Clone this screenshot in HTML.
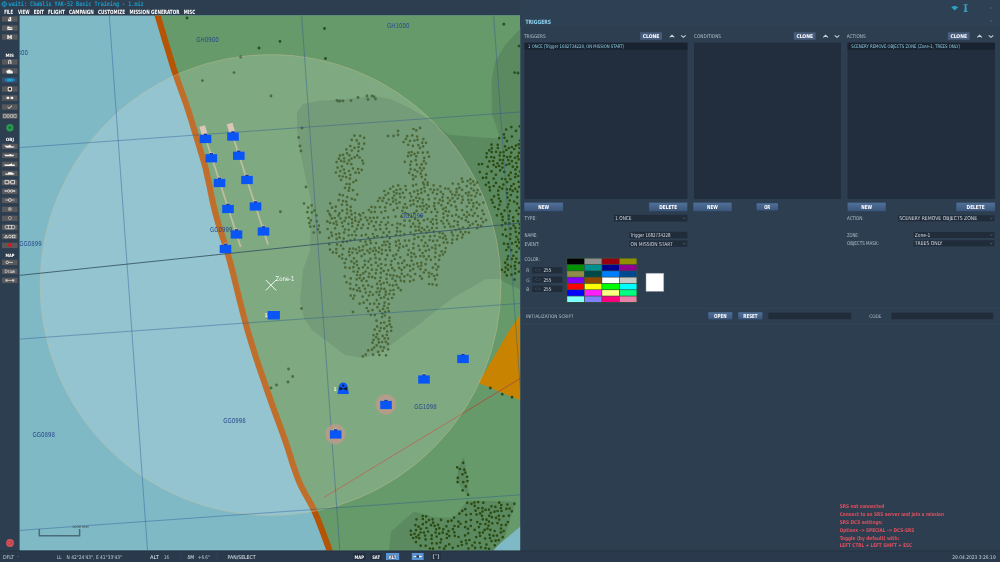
<!DOCTYPE html>
<html><head><meta charset="utf-8"><title>Mission Editor</title>
<style>
html,body{margin:0;padding:0;background:#2d3e50;width:1000px;height:562px;overflow:hidden}
svg text{font-family:"DejaVu Sans Condensed","DejaVu Sans","Liberation Sans",sans-serif}
svg .mono{font-family:"DejaVu Sans Mono","Liberation Mono",monospace}
</style></head><body>
<svg width="1000" height="562" viewBox="0 0 1000 562" style="position:absolute;left:0;top:0;will-change:transform">
<defs><clipPath id="mc"><rect x="19.6" y="15.4" width="500.5" height="535.3"/></clipPath>
<linearGradient id="bt" x1="0" y1="0" x2="0" y2="1"><stop offset="0" stop-color="#52739c"/><stop offset="1" stop-color="#3a5478"/></linearGradient>
<radialGradient id="pk"><stop offset="0" stop-color="#c8988c" stop-opacity="0.55"/><stop offset="0.82" stop-color="#c8988c" stop-opacity="0.75"/><stop offset="1" stop-color="#c8988c" stop-opacity="0"/></radialGradient>
</defs>
<rect width="1000" height="562" fill="#2d3e50"/>
<g clip-path="url(#mc)">
<rect x="19" y="15" width="502" height="536" fill="#7fb9c6"/>
<polygon points="157.2,14.0 159.2,20.7 162.1,30.3 165.3,41.3 168.5,51.7 171.0,60.0 172.7,65.5 173.9,69.4 175.0,72.5 176.1,75.8 177.5,80.0 179.3,85.0 181.2,90.3 183.3,96.1 185.6,102.6 188.1,110.0 191.0,119.2 194.3,130.0 197.7,141.2 200.8,151.6 203.3,160.0 204.9,165.7 205.9,169.4 206.5,172.4 207.2,175.5 208.2,180.0 209.5,185.9 210.8,192.4 212.2,199.5 213.9,207.1 215.9,215.0 218.2,223.1 220.8,231.5 223.7,240.4 226.7,250.2 229.8,261.0 233.1,273.5 236.5,287.4 240.1,301.9 243.8,316.4 247.5,330.0 251.3,342.7 255.2,355.1 259.2,367.2 263.2,378.8 267.0,390.0 270.8,400.8 274.5,411.2 278.2,421.1 281.7,430.7 285.0,440.0 288.0,448.9 290.7,457.5 293.3,465.8 296.0,473.6 298.8,481.0 301.9,487.6 305.0,493.5 308.3,499.2 311.5,505.1 314.7,511.6 318.0,519.6 321.6,528.8 325.0,538.0 327.9,545.9 330.0,551.5 521.0,551.0 521.0,14.0" fill="#669a6a"/>
<polygon points="491,551 521,526 521,551" fill="#7fb9c6"/>
<polygon points="297.0,112.0 303.0,104.0 317.0,101.0 345.0,99.0 375.0,96.0 390.0,99.0 410.0,108.0 430.0,120.0 448.6,134.5 457.4,135.5 473.5,136.7 490.0,138.0 499.7,138.6 496.0,125.0 491.8,115.0 491.6,80.0 495.0,62.0 505.0,45.0 521.0,28.0 521.0,290.0 508.0,284.0 500.0,279.0 486.0,279.0 453.6,297.4 433.6,312.4 418.7,324.8 400.0,338.0 385.0,350.0 365.0,358.0 345.0,355.0 329.0,343.0 312.0,330.0 304.0,318.0 300.0,300.0 303.0,270.0 310.0,250.0 311.0,200.0 305.0,175.0 300.0,150.0 297.0,130.0" fill="#5c8a60"/>
<polygon points="414.0,511.6 434.0,517.0 454.0,518.0 467.0,500.6 515.6,501.7 504.6,538.0 493.0,551.0 389.0,551.0 391.0,531.4" fill="#5c8a60"/>
<polygon points="464.0,456.6 469.4,497.0 463.0,490.0 457.0,481.0 458.0,468.0" fill="#5c8a60"/>
<polygon points="509.7,330 478.5,383 521,400.5 521,314" fill="#c88400"/>
<polyline points="157.2,14.0 159.2,20.7 162.1,30.3 165.3,41.3 168.5,51.7 171.0,60.0 172.7,65.5 173.9,69.4 175.0,72.5 176.1,75.8 177.5,80.0 179.3,85.0 181.2,90.3 183.3,96.1 185.6,102.6 188.1,110.0 191.0,119.2 194.3,130.0 197.7,141.2 200.8,151.6 203.3,160.0 204.9,165.7 205.9,169.4 206.5,172.4 207.2,175.5 208.2,180.0 209.5,185.9 210.8,192.4 212.2,199.5 213.9,207.1 215.9,215.0 218.2,223.1 220.8,231.5 223.7,240.4 226.7,250.2 229.8,261.0 233.1,273.5 236.5,287.4 240.1,301.9 243.8,316.4 247.5,330.0 251.3,342.7 255.2,355.1 259.2,367.2 263.2,378.8 267.0,390.0 270.8,400.8 274.5,411.2 278.2,421.1 281.7,430.7 285.0,440.0 288.0,448.9 290.7,457.5 293.3,465.8 296.0,473.6 298.8,481.0 301.9,487.6 305.0,493.5 308.3,499.2 311.5,505.1 314.7,511.6 318.0,519.6 321.6,528.8 325.0,538.0 327.9,545.9 330.0,551.5" fill="none" stroke="#b45404" stroke-width="6.1" stroke-linejoin="round"/>
<path d="M351.7 139.9h0M347.4 163.6h0M343.1 201.0h0M350.8 210.8h0M364.1 137.8h0M359.6 157.5h0M338.7 200.1h0M351.3 164.2h0M352.9 168.6h0M344.2 158.3h0M347.0 204.9h0M354.7 157.3h0M364.2 143.6h0M342.9 195.3h0M356.1 180.4h0M353.4 182.1h0M349.0 171.0h0M345.0 187.8h0M351.6 214.4h0M341.9 204.6h0M337.6 167.6h0M349.4 155.3h0M341.0 179.9h0M346.6 184.0h0M341.9 166.3h0M350.3 146.0h0M336.6 162.1h0M359.3 214.4h0M344.7 173.2h0M340.0 155.4h0M358.5 147.1h0M327.9 211.0h0M347.1 213.3h0M347.2 197.1h0M363.3 163.5h0M350.7 206.9h0M358.9 172.8h0M351.8 198.8h0M355.5 172.7h0M342.3 210.7h0M354.5 147.8h0M347.0 209.6h0M358.4 151.1h0M332.0 207.7h0M340.4 171.1h0M346.1 177.1h0M339.4 176.0h0M361.7 169.9h0M350.3 174.9h0M335.3 211.2h0M354.4 135.6h0M329.4 213.8h0M348.7 190.7h0M330.2 203.4h0M344.2 161.5h0M347.0 153.3h0M338.9 158.7h0M358.1 169.0h0M354.9 199.8h0M346.2 201.6h0M353.0 190.2h0M357.3 194.6h0M355.1 213.0h0M335.8 206.7h0M358.9 143.7h0M346.4 149.4h0M342.7 176.5h0M360.2 135.8h0M351.5 158.6h0M343.0 154.8h0M362.4 160.7h0M341.2 160.9h0M335.9 172.5h0M362.3 148.8h0M356.7 140.4h0M339.4 213.4h0M349.0 160.4h0M349.7 184.2h0M351.8 150.5h0M349.8 178.6h0M344.0 169.5h0M357.3 155.4h0M349.3 187.8h0M339.7 194.7h0M421.8 176.9h0M422.2 142.7h0M418.0 152.7h0M424.3 157.9h0M410.2 164.9h0M410.0 140.9h0M423.1 182.7h0M423.1 146.3h0M420.0 167.9h0M415.7 176.5h0M414.8 169.8h0M418.4 145.2h0M412.3 135.4h0M421.7 164.4h0M421.8 170.5h0M404.8 161.8h0M412.8 175.2h0M425.1 179.6h0M427.7 182.7h0M405.9 139.1h0M425.9 174.9h0M423.4 139.1h0M411.6 152.0h0M403.6 142.1h0M410.6 169.2h0M412.9 145.9h0M429.0 156.7h0M426.0 163.5h0M417.5 139.8h0M408.0 156.2h0M420.0 148.0h0M413.2 179.2h0M417.4 171.5h0M423.9 161.2h0M408.2 144.8h0M407.2 136.2h0M417.1 136.5h0M422.8 152.7h0M413.5 129.0h0M427.5 152.4h0M414.4 140.5h0M423.9 168.3h0M414.4 153.9h0M416.2 184.5h0M416.8 164.7h0M415.7 160.2h0M426.0 142.8h0M411.1 155.3h0M420.1 127.9h0M409.3 172.8h0M416.3 130.4h0M416.3 156.4h0M408.7 152.7h0M420.7 173.7h0M411.1 161.6h0M335.1 228.3h0M437.3 212.1h0M435.1 257.2h0M450.6 191.7h0M433.2 240.9h0M418.1 220.5h0M375.9 250.6h0M378.6 252.2h0M329.3 244.2h0M393.8 191.8h0M431.4 212.1h0M443.5 217.6h0M445.8 207.5h0M445.2 188.5h0M368.2 350.4h0M459.4 187.7h0M377.4 307.2h0M386.5 278.8h0M385.8 291.7h0M429.0 249.9h0M389.5 317.7h0M418.8 226.8h0M380.8 284.5h0M424.4 229.8h0M388.0 299.0h0M457.8 225.1h0M327.3 221.4h0M395.4 280.9h0M419.6 223.4h0M477.9 216.1h0M402.4 211.0h0M368.3 311.2h0M452.1 215.8h0M404.2 281.4h0M392.2 268.2h0M454.6 201.7h0M423.7 236.5h0M474.4 184.8h0M423.9 246.1h0M368.7 276.9h0M435.5 245.3h0M399.6 202.4h0M368.4 237.8h0M462.6 181.7h0M436.7 228.0h0M344.1 232.6h0M405.0 204.0h0M443.2 208.9h0M349.6 255.3h0M400.3 235.5h0M428.8 199.3h0M370.2 248.8h0M352.2 222.9h0M463.0 234.5h0M354.2 263.3h0M378.5 339.2h0M404.3 225.7h0M368.8 210.1h0M386.0 355.3h0M342.8 226.3h0M444.7 227.0h0M457.7 235.7h0M357.1 253.1h0M474.7 213.2h0M419.6 198.4h0M425.6 264.2h0M445.7 248.1h0M468.3 222.0h0M386.5 203.1h0M387.1 282.5h0M399.2 267.9h0M379.0 303.9h0M388.8 311.2h0M410.2 270.6h0M483.7 214.2h0M420.4 269.2h0M440.8 191.9h0M407.0 265.1h0M392.7 198.2h0M350.8 278.4h0M447.9 203.2h0M390.0 250.4h0M452.9 235.3h0M365.9 234.7h0M367.4 250.7h0M429.5 240.1h0M413.0 185.7h0M470.3 179.3h0M430.9 221.9h0M436.9 223.3h0M427.6 219.1h0M411.3 252.8h0M481.0 225.9h0M376.5 292.1h0M346.5 282.3h0M370.5 258.8h0M413.5 200.3h0M374.6 247.8h0M373.7 217.8h0M359.6 303.7h0M401.7 273.8h0M426.3 259.3h0M377.3 217.6h0M362.9 267.3h0M328.9 237.9h0M466.6 216.9h0M417.2 263.4h0M373.1 354.7h0M374.9 315.1h0M337.0 244.4h0M352.0 235.0h0M384.1 297.3h0M475.2 196.4h0M419.7 249.9h0M425.4 242.8h0M400.3 257.3h0M390.3 275.2h0M389.3 232.2h0M407.9 254.7h0M356.8 228.9h0M421.2 189.2h0M482.3 210.6h0M383.9 347.4h0M436.6 269.6h0M343.0 241.9h0M398.3 287.9h0M354.7 231.5h0M410.0 193.3h0M352.3 226.3h0M409.9 265.9h0M429.1 284.0h0M376.7 300.1h0M327.6 229.0h0M435.2 209.2h0M407.7 274.8h0M370.1 292.0h0M451.8 232.4h0M442.9 238.1h0M399.9 244.0h0M459.2 228.9h0M366.4 244.7h0M443.4 213.7h0M377.1 334.1h0M385.1 207.3h0M418.0 194.1h0M413.5 243.9h0M383.9 218.1h0M358.0 225.2h0M434.6 235.8h0M342.0 222.6h0M462.3 196.5h0M384.2 305.9h0M388.1 349.3h0M408.8 214.8h0M400.3 197.1h0M441.4 221.0h0M425.5 212.1h0M468.3 195.6h0M370.8 315.0h0M389.3 294.0h0M419.0 230.2h0M390.2 188.8h0M379.0 294.9h0M344.7 276.4h0M385.6 265.1h0M348.4 223.9h0M393.8 294.3h0M428.9 206.4h0M376.1 243.1h0M334.7 218.0h0M448.4 188.8h0M439.5 245.4h0M428.8 256.3h0M369.3 273.5h0M415.1 218.9h0M336.6 238.8h0M393.7 210.1h0M365.5 217.5h0M381.0 323.0h0M354.4 295.6h0M385.4 211.0h0M336.8 224.7h0M399.6 193.8h0M379.6 259.2h0M344.6 263.0h0M397.3 207.9h0M432.7 219.3h0M463.0 227.5h0M357.1 290.4h0M379.9 207.0h0M460.7 231.9h0M386.7 274.4h0M386.8 326.0h0M438.5 203.1h0M372.9 294.7h0M381.9 253.7h0M473.4 203.3h0M374.9 254.5h0M418.3 237.1h0M458.4 184.0h0M436.6 285.1h0M375.1 278.1h0M431.9 228.1h0M382.6 335.9h0M394.5 270.5h0M418.5 245.9h0M363.7 278.4h0M345.3 267.4h0M393.1 186.5h0M390.5 204.5h0M452.5 198.2h0M452.7 183.6h0M365.4 241.5h0M361.5 228.2h0M441.6 251.4h0M382.3 313.5h0M346.9 241.6h0M424.8 191.3h0M436.4 219.8h0M357.0 275.0h0M388.7 199.5h0M382.5 200.8h0M339.3 233.6h0M354.5 239.4h0M389.8 238.1h0M371.3 265.0h0M385.8 224.8h0M379.4 354.9h0M405.0 240.6h0M383.6 198.0h0M375.8 229.8h0M384.8 315.5h0M472.7 223.8h0M424.4 187.6h0M357.5 271.8h0M379.9 310.9h0M432.1 247.6h0M336.3 249.2h0M381.2 264.0h0M423.9 220.3h0M447.1 220.4h0M400.4 224.2h0M452.4 239.7h0M417.0 206.5h0M430.1 236.3h0M369.5 252.8h0M372.8 234.0h0M353.2 298.6h0M423.8 256.4h0M466.9 206.5h0M437.6 189.6h0M382.0 342.0h0M349.0 251.8h0M415.1 274.0h0M389.7 243.9h0M368.3 285.4h0M388.1 217.3h0M439.5 232.7h0M431.7 274.0h0M378.1 351.8h0M365.0 288.8h0M447.4 242.7h0M428.9 272.9h0M363.2 285.7h0M411.6 260.7h0M458.8 216.9h0M467.6 181.0h0M351.9 219.3h0M343.7 238.6h0M400.4 189.2h0M439.6 255.7h0M449.9 200.6h0M437.2 240.5h0M411.4 216.7h0M387.1 235.6h0M359.5 278.0h0M443.3 223.5h0M462.1 189.8h0M359.7 250.9h0M398.7 240.6h0M476.8 208.3h0M398.3 263.4h0M437.1 274.9h0M468.3 199.8h0M381.2 268.4h0M371.5 221.3h0M465.8 220.3h0M402.2 263.0h0M421.6 240.3h0M456.8 209.8h0M413.4 248.2h0M374.2 303.7h0M336.4 252.8h0M466.7 186.2h0M423.6 206.2h0M374.8 211.8h0M462.8 199.8h0M417.8 201.3h0M363.2 273.4h0M342.2 258.5h0M445.0 252.1h0M437.0 194.0h0M374.1 237.0h0M477.6 190.1h0M423.8 272.5h0M464.0 214.8h0M417.6 190.6h0M384.2 241.9h0M434.4 203.2h0M380.7 328.0h0M346.0 259.1h0M353.6 271.5h0M409.1 240.5h0M359.0 247.3h0M410.9 226.7h0M471.3 188.5h0M420.7 216.0h0M366.7 308.0h0M359.2 288.0h0M447.8 197.8h0M422.6 253.1h0M468.1 228.0h0M480.2 194.3h0M401.2 216.5h0M381.3 212.3h0M384.3 328.4h0M427.3 226.8h0M390.9 264.9h0M461.6 202.8h0M388.0 343.9h0M385.6 294.7h0M379.7 198.2h0M450.5 226.6h0M349.7 267.9h0M469.1 202.8h0M344.6 220.9h0M483.1 222.1h0M378.0 201.0h0M448.9 223.7h0M385.8 341.8h0M370.0 217.8h0M345.0 229.5h0M382.4 245.2h0M413.2 268.9h0M348.6 235.3h0M435.2 279.3h0M392.4 278.6h0M371.2 212.2h0M456.9 239.2h0M440.3 186.3h0M380.6 277.6h0M410.0 281.3h0M404.4 197.6h0M392.3 225.0h0M358.9 221.9h0M353.5 289.3h0M384.6 338.4h0M418.3 266.5h0M360.9 219.4h0M361.7 280.7h0M400.9 280.7h0M398.2 185.4h0M403.2 246.6h0M365.8 292.5h0M439.1 259.8h0M424.0 184.5h0M365.7 354.6h0M362.6 296.6h0M475.9 221.4h0M353.4 267.2h0M415.4 226.5h0M396.5 193.3h0M386.5 228.7h0M411.3 256.8h0M393.0 285.4h0M367.9 228.3h0M383.5 232.7h0M342.3 254.5h0M330.4 215.5h0M377.8 288.4h0M483.4 202.6h0M373.6 339.8h0M367.3 220.3h0M461.8 178.6h0M434.1 206.2h0M430.9 259.8h0M364.4 254.0h0M385.5 259.3h0M466.0 193.2h0M467.1 212.1h0M400.4 231.5h0M385.5 195.0h0M432.8 267.7h0M364.9 264.8h0M473.2 206.4h0M392.1 298.0h0M364.8 260.8h0M462.1 210.2h0M379.1 247.9h0M349.3 217.2h0M470.6 183.5h0M373.9 226.2h0M345.9 217.8h0M472.8 215.8h0M446.1 239.2h0M384.6 302.6h0M422.4 209.5h0M370.0 303.8h0M404.6 220.6h0M445.1 235.9h0M406.7 207.7h0M421.4 192.9h0M455.7 230.0h0M410.2 200.8h0M387.2 255.2h0M400.8 290.2h0M340.9 245.5h0M396.0 235.2h0M465.4 232.1h0M370.1 240.3h0M388.3 193.3h0M393.5 290.0h0M414.3 234.9h0M415.7 256.8h0M382.0 317.1h0M361.7 235.6h0M456.0 214.8h0M396.5 190.0h0M455.8 206.7h0M369.0 223.8h0M410.7 205.3h0M476.9 182.7h0M353.1 248.5h0M378.2 265.8h0M356.7 261.3h0M422.9 199.6h0M384.4 288.9h0M397.1 227.9h0M350.5 240.3h0M331.3 232.5h0M383.7 270.9h0M404.3 234.2h0M389.7 285.1h0M454.3 221.0h0M336.3 221.5h0M356.3 285.1h0M441.4 205.2h0M420.3 256.1h0M388.0 222.5h0M433.0 224.1h0M459.0 195.1h0M357.1 265.0h0M447.6 215.7h0M422.5 202.8h0M415.7 230.7h0M429.0 276.6h0M416.6 210.9h0M410.5 232.5h0M420.1 276.1h0M395.5 216.6h0M396.5 203.5h0M435.5 252.7h0M434.1 189.8h0M363.1 246.3h0M381.3 222.0h0M435.5 264.2h0M443.1 194.2h0M358.8 268.4h0M408.6 250.1h0M413.2 223.7h0M361.5 256.2h0M385.2 311.9h0M445.8 211.2h0M398.2 250.5h0M372.5 342.7h0M380.9 298.0h0M421.9 278.7h0M379.7 291.6h0M366.5 281.1h0M456.5 192.2h0M387.2 331.5h0M381.9 249.8h0M399.3 247.7h0M387.7 308.0h0M426.3 204.6h0M416.2 197.7h0M348.8 229.8h0M432.8 192.6h0M428.1 195.2h0M372.5 310.1h0M461.7 218.6h0M363.3 213.0h0M384.2 322.5h0M343.3 248.8h0M356.6 279.3h0M414.1 253.9h0M414.1 213.0h0M375.6 257.9h0M434.1 276.0h0M386.8 335.0h0M360.1 291.2h0M394.2 195.5h0M476.7 193.1h0M421.9 228.0h0M355.4 220.7h0M426.8 208.7h0M395.8 241.9h0M376.0 222.2h0M421.3 265.7h0M339.3 256.3h0M406.6 245.7h0M427.6 185.0h0M380.8 272.9h0M363.7 302.7h0M379.7 281.0h0M481.2 218.5h0M330.0 222.8h0M340.5 218.4h0M393.3 255.7h0M332.0 235.7h0M379.7 225.0h0M399.8 277.3h0M352.4 252.6h0M369.0 295.5h0M377.3 236.1h0M367.8 267.8h0M376.4 269.8h0M365.6 271.6h0M462.1 237.5h0M333.7 223.4h0M382.7 350.8h0M471.3 209.9h0M389.3 320.8h0M375.8 273.3h0M360.4 275.1h0M410.6 276.5h0M397.0 276.2h0M385.6 245.0h0M380.6 346.8h0M401.6 269.9h0M486.1 220.1h0M355.2 217.5h0M350.2 283.8h0M374.7 329.6h0M393.2 201.6h0M433.8 231.7h0M456.6 189.2h0M414.2 191.6h0M393.5 275.5h0M391.5 261.1h0M372.0 349.7h0M377.0 283.9h0M383.6 283.0h0M380.3 229.2h0M330.0 249.6h0M439.8 237.1h0M442.5 197.3h0M425.7 250.9h0M367.1 300.0h0M332.9 252.4h0M429.2 230.5h0M382.2 237.2h0M455.3 195.2h0M471.4 195.5h0M436.1 216.0h0M448.9 211.6h0M413.6 204.2h0M339.5 237.4h0M405.4 186.0h0M360.4 240.9h0M413.6 280.1h0M351.4 261.4h0M402.9 192.8h0M377.1 326.4h0M469.2 214.9h0M421.3 232.1h0M468.9 192.4h0M420.3 206.4h0M433.6 185.3h0M432.5 284.3h0M413.6 264.5h0M425.6 270.0h0M355.9 235.3h0M379.7 331.0h0M453.6 226.5h0M371.9 269.7h0M477.2 228.2h0M397.1 231.4h0M435.5 248.7h0M396.4 284.8h0M430.5 189.3h0M387.4 241.5h0M438.3 266.7h0M395.8 199.8h0M376.5 320.7h0M384.3 191.0h0M372.0 286.8h0M383.1 308.9h0M426.5 232.7h0M442.8 233.5h0M404.3 260.7h0M409.7 220.8h0M360.4 215.6h0M371.5 206.9h0M350.7 295.6h0M476.8 202.4h0M451.2 205.3h0M439.8 199.9h0M372.9 250.9h0M362.6 250.1h0M414.4 238.9h0M388.8 304.0h0M394.8 259.0h0M421.3 262.6h0M405.3 213.2h0M397.4 223.5h0M388.2 270.3h0M391.2 330.8h0M378.8 342.4h0M331.7 218.4h0M477.9 225.0h0M362.8 356.3h0M396.3 254.4h0M406.1 189.8h0M404.4 276.4h0M388.1 338.5h0M451.9 243.1h0M385.8 250.3h0M479.3 204.6h0M391.4 327.0h0M452.3 194.3h0M375.8 262.7h0M336.1 234.3h0M354.0 258.3h0M468.9 232.6h0M471.4 200.1h0M374.1 347.5h0M376.6 345.4h0M376.2 337.1h0M389.8 324.4h0M473.1 181.4h0M404.4 267.4h0M457.7 221.9h0M427.5 245.8h0M442.9 254.5h0M373.5 335.1h0M473.8 190.5h0M375.2 207.4h0M370.9 243.2h0M363.1 224.8h0M390.3 290.5h0M403.4 207.4h0M443.7 242.6h0M442.8 200.9h0M381.2 288.7h0M338.4 215.6h0M435.0 198.5h0M349.8 248.8h0M469.9 225.5h0M355.9 249.5h0M368.5 261.4h0M350.3 288.7h0M411.3 196.5h0M396.3 245.6h0M389.4 247.2h0M457.7 198.5h0M372.2 276.9h0M311.7 205.3h0M316.9 221.3h0M304.0 203.5h0M316.4 215.4h0M311.8 212.5h0M307.3 212.1h0M308.2 207.6h0M313.7 232.5h0M318.8 225.7h0M308.5 218.0h0M319.8 232.4h0M310.3 226.6h0M314.0 226.3h0M309.3 223.2h0M314.4 210.6h0M318.0 229.4h0M310.8 220.4h0M489.2 150.3h0M518.0 221.1h0M508.8 219.0h0M487.8 166.7h0M516.5 236.8h0M496.0 182.9h0M508.8 148.0h0M508.3 160.1h0M511.9 136.5h0M516.4 258.6h0M516.4 252.0h0M502.4 163.3h0M506.9 189.3h0M493.6 164.9h0M482.0 164.0h0M519.7 126.3h0M505.0 146.4h0M518.6 181.9h0M515.7 231.8h0M499.5 204.9h0M509.9 211.2h0M519.2 207.8h0M516.0 145.7h0M515.1 177.1h0M488.7 182.6h0M513.6 225.5h0M510.1 189.3h0M511.5 274.7h0M506.3 150.0h0M496.1 151.8h0M492.7 202.7h0M499.2 138.1h0M504.5 137.8h0M500.3 152.5h0M506.3 250.0h0M496.9 215.3h0M508.8 175.4h0M516.4 210.6h0M504.0 243.7h0M504.8 272.1h0M518.1 239.5h0M511.9 147.0h0M489.6 187.2h0M505.5 223.2h0M503.9 134.4h0M505.2 262.7h0M509.3 223.4h0M508.1 256.3h0M494.2 157.6h0M486.5 157.2h0M509.3 163.9h0M515.3 188.8h0M514.7 265.8h0M518.9 152.9h0M515.7 242.0h0M505.6 267.6h0M515.3 262.0h0M504.6 210.6h0M519.0 271.6h0M479.8 172.1h0M486.2 177.7h0M518.8 144.4h0M502.4 167.6h0M506.4 164.9h0M518.2 176.0h0M506.1 129.5h0M515.4 227.9h0M510.7 172.7h0M512.0 243.4h0M519.2 233.2h0M511.3 127.1h0M510.9 195.0h0M510.9 266.6h0M489.9 190.4h0M506.3 236.2h0M511.9 161.2h0M513.2 217.3h0M512.8 166.7h0M511.9 259.1h0M493.7 178.5h0M507.4 207.3h0M491.8 148.3h0M516.0 130.9h0M499.1 165.9h0M502.0 178.8h0M517.0 246.1h0M519.9 171.5h0M498.3 194.8h0M513.3 221.1h0M499.9 159.9h0M514.5 279.6h0M498.2 190.7h0M512.7 190.9h0M510.4 179.1h0M504.3 171.9h0M510.5 234.3h0M503.6 152.0h0M478.8 164.3h0M507.3 259.3h0M517.1 167.1h0M518.4 214.1h0M516.3 163.0h0M510.3 156.7h0M499.6 187.0h0M499.6 155.5h0M489.4 161.3h0M514.2 149.0h0M511.3 186.2h0M517.8 156.4h0M494.1 196.3h0M514.1 201.6h0M497.7 144.8h0M501.3 213.9h0M507.8 264.8h0M497.9 148.0h0M486.7 153.3h0M495.9 174.8h0M503.9 155.9h0M507.1 182.0h0M517.3 197.2h0M515.1 273.4h0M493.2 161.0h0M511.3 250.2h0M507.1 193.1h0M502.6 220.2h0M496.1 167.0h0M485.9 184.9h0M491.5 171.4h0M505.4 229.6h0M482.9 177.9h0M519.2 242.4h0M511.3 152.7h0M498.3 209.1h0M506.8 275.4h0M517.4 191.6h0M502.3 188.7h0M500.5 201.4h0M515.4 169.7h0M499.0 198.5h0M509.7 200.5h0M517.1 203.6h0M497.5 163.3h0M502.8 234.6h0M502.0 225.3h0M515.7 174.0h0M519.8 228.1h0M520.0 140.5h0M491.2 157.0h0M519.4 248.3h0M494.7 207.0h0M507.5 197.4h0M507.8 244.2h0M515.2 268.8h0M510.6 228.7h0M518.7 159.3h0M515.0 157.8h0M519.8 224.2h0M513.7 184.0h0M508.5 247.3h0M502.6 216.8h0M491.6 199.8h0M501.8 269.8h0M508.8 215.7h0M503.3 184.6h0M505.4 179.3h0M503.0 160.1h0M500.2 170.4h0M519.0 262.9h0M508.0 269.7h0M507.1 157.1h0M493.7 186.0h0M491.7 152.1h0M519.1 186.8h0M486.6 173.8h0M513.3 255.8h0M508.5 204.3h0M510.1 238.8h0M519.5 148.1h0M491.5 144.7h0M507.0 141.1h0M483.3 502.7h0M501.3 505.0h0M497.6 511.0h0M465.1 535.4h0M425.1 535.6h0M458.0 546.1h0M411.0 534.8h0M466.5 543.5h0M459.4 513.7h0M482.0 515.8h0M506.4 508.9h0M507.4 504.5h0M478.9 527.1h0M472.2 545.5h0M433.0 548.7h0M469.4 540.0h0M485.4 524.1h0M432.0 543.3h0M468.4 548.5h0M502.7 537.2h0M485.5 509.9h0M497.0 535.6h0M490.0 538.1h0M482.7 519.3h0M433.1 522.7h0M436.6 536.6h0M443.3 529.3h0M465.3 509.2h0M498.6 540.2h0M491.4 506.3h0M494.6 531.0h0M507.9 522.0h0M441.0 519.9h0M491.9 517.2h0M484.6 529.9h0M500.9 532.4h0M514.4 503.8h0M489.2 515.8h0M479.5 532.8h0M410.8 530.9h0M431.7 535.4h0M487.5 528.7h0M465.1 527.1h0M466.0 521.9h0M494.8 545.3h0M474.7 505.9h0M465.9 540.5h0M480.3 524.0h0M425.7 545.8h0M501.4 525.0h0M414.5 533.8h0M451.5 520.7h0M423.9 532.6h0M488.5 525.6h0M468.2 533.3h0M476.2 537.1h0M446.9 538.0h0M470.8 514.0h0M495.6 540.7h0M440.4 542.5h0M438.0 524.8h0M467.2 502.8h0M419.3 538.2h0M508.9 515.7h0M458.2 526.7h0M467.9 528.8h0M416.0 542.1h0M462.3 510.9h0M454.8 535.8h0M488.9 509.6h0M439.5 547.5h0M475.6 510.7h0M480.9 547.4h0M416.3 537.2h0M486.5 544.6h0M495.4 506.9h0M478.3 508.1h0M429.9 548.5h0M470.9 520.1h0M490.4 529.8h0M439.2 533.7h0M494.5 511.7h0M461.9 545.0h0M458.5 537.0h0M415.4 525.1h0M429.0 520.1h0M416.5 519.3h0M503.7 531.0h0M477.3 522.1h0M497.5 523.1h0M428.1 531.5h0M471.5 503.8h0M452.7 547.8h0M475.1 547.9h0M458.4 521.6h0M505.9 524.9h0M500.9 508.1h0M460.5 523.8h0M420.5 532.5h0M454.3 532.3h0M426.1 516.3h0M482.4 508.2h0M448.6 531.2h0M489.0 548.8h0M479.7 543.0h0M478.2 502.1h0M511.9 511.3h0M466.2 514.8h0M461.4 541.8h0M480.1 513.4h0M491.5 541.1h0M449.3 535.9h0M492.3 523.3h0M474.4 502.4h0M436.1 529.3h0M488.9 521.7h0M452.9 529.2h0M420.6 545.7h0M445.8 546.1h0M426.2 522.2h0M418.5 526.7h0M416.1 530.1h0M413.2 538.0h0M476.6 514.5h0M441.2 539.4h0M434.6 525.9h0M499.2 502.7h0M501.0 528.6h0M454.5 526.0h0M486.5 519.7h0M482.5 511.5h0M448.0 521.4h0M446.4 526.3h0M501.5 511.0h0M439.3 528.2h0M482.9 532.5h0M431.0 525.2h0M449.2 544.3h0M431.5 538.9h0M499.2 519.6h0M470.8 526.0h0M493.4 535.7h0M496.0 517.9h0M474.7 542.5h0M489.6 534.8h0M442.7 532.6h0M422.8 519.0h0M425.6 539.4h0M422.7 516.0h0M432.6 519.3h0M485.1 538.5h0M420.8 528.9h0M435.6 532.6h0M509.6 508.6h0M422.8 524.2h0M480.1 535.8h0M446.8 534.1h0M503.5 516.1h0M418.5 535.0h0M474.7 529.9h0M436.7 543.4h0M485.5 548.1h0M490.8 512.8h0M426.5 528.0h0M444.1 548.7h0M454.1 517.6h0M498.8 515.8h0M467.1 476.8h0M457.6 482.1h0M459.9 469.0h0M462.6 490.3h0M465.4 472.6h0M464.3 469.7h0M462.5 474.3h0M465.8 486.4h0M468.1 494.8h0M467.5 481.1h0M463.2 462.8h0M457.8 477.9h0M457.2 467.3h0M463.3 482.1h0" stroke="#2c4c12" stroke-width="2.7" stroke-linecap="round" fill="none"/>
<path d="M187.0 18.0h0M280.0 41.4h0M259.0 48.0h0M240.6 57.0h0M234.0 72.6h0M202.4 80.6h0M271.0 96.0h0M324.5 28.5h0M325.5 58.5h0M338.0 101.0h0M337.0 100.5h0M340.0 101.0h0M343.0 101.0h0M351.0 100.6h0M358.0 97.5h0M367.0 96.0h0M368.0 99.5h0M372.0 96.0h0M374.0 96.6h0M375.5 99.0h0M503.8 24.2h0M514.6 72.6h0M518.0 73.0h0M302.0 128.0h0M298.7 137.5h0M300.0 146.0h0M301.0 151.0h0M306.0 187.0h0M388.0 136.0h0M393.6 136.0h0M398.0 131.0h0M398.0 135.0h0M280.4 211.7h0M288.5 369.0h0M292.7 376.5h0M288.0 382.0h0M276.5 385.0h0M271.0 388.0h0M301.5 308.5h0M353.0 312.0h0M490.3 388.0h0M502.2 394.2h0M512.0 397.3h0M519.0 46.0h0" stroke="#2a5020" stroke-width="2.9" stroke-linecap="round" fill="none"/>
<line x1="324.2" y1="497.3" x2="521" y2="378" stroke="#a8503a" stroke-width="0.9"/>
<circle cx="270.5" cy="285" r="230.5" fill="#fff" fill-opacity="0.155" stroke="#cfc090" stroke-opacity="0.38" stroke-width="1"/>
<line x1="109.3" y1="15.5" x2="147.5" y2="550" stroke="#2a5596" stroke-width="0.6" stroke-opacity="0.7"/>
<line x1="301.6" y1="15.5" x2="339.8" y2="550" stroke="#2a5596" stroke-width="0.6" stroke-opacity="0.7"/>
<line x1="493.6" y1="15.5" x2="531.8" y2="550" stroke="#2a5596" stroke-width="0.6" stroke-opacity="0.7"/>
<line x1="19.5" y1="147.6" x2="520" y2="112.0" stroke="#2a5596" stroke-width="0.6" stroke-opacity="0.7"/>
<line x1="19.5" y1="339.1" x2="520" y2="303.5" stroke="#2a5596" stroke-width="0.6" stroke-opacity="0.7"/>
<line x1="19.5" y1="530.4" x2="520" y2="494.8" stroke="#2a5596" stroke-width="0.6" stroke-opacity="0.7"/>
<line x1="19.5" y1="275.4" x2="520" y2="223" stroke="#3a5866" stroke-width="0.9"/>
<text x="196.3" y="41.8" textLength="22.5" lengthAdjust="spacingAndGlyphs" font-size="6.6" fill="#2b4c8c">GH0900</text>
<text x="387.0" y="28.0" textLength="22.5" lengthAdjust="spacingAndGlyphs" font-size="6.6" fill="#2b4c8c">GH1000</text>
<text x="19.3" y="245.8" textLength="22.5" lengthAdjust="spacingAndGlyphs" font-size="6.6" fill="#2b4c8c">GG0899</text>
<text x="210.0" y="232.4" textLength="22.5" lengthAdjust="spacingAndGlyphs" font-size="6.6" fill="#2b4c8c">GG0999</text>
<text x="401.0" y="217.6" textLength="22.5" lengthAdjust="spacingAndGlyphs" font-size="6.6" fill="#2b4c8c">GG1099</text>
<text x="32.5" y="436.6" textLength="22.5" lengthAdjust="spacingAndGlyphs" font-size="6.6" fill="#2b4c8c">GG0898</text>
<text x="223.2" y="422.7" textLength="22.5" lengthAdjust="spacingAndGlyphs" font-size="6.6" fill="#2b4c8c">GG0998</text>
<text x="414.3" y="409.2" textLength="22.5" lengthAdjust="spacingAndGlyphs" font-size="6.6" fill="#2b4c8c">GG1098</text>
<text x="5.5" y="54.6" textLength="22.5" lengthAdjust="spacingAndGlyphs" font-size="6.6" fill="#2b4c8c">GH0800</text>
<line x1="202.7" y1="129.5" x2="240.7" y2="247" stroke="#cdc3a3" stroke-width="1.8" stroke-opacity="0.8"/>
<line x1="229.8" y1="127" x2="268" y2="244.5" stroke="#cdc3a3" stroke-width="1.8" stroke-opacity="0.8"/>
<line x1="202.2" y1="126" x2="204.5" y2="134" stroke="#d9c6b6" stroke-width="6"/>
<line x1="229.6" y1="123.5" x2="232" y2="131.5" stroke="#d9c6b6" stroke-width="6"/>
<circle cx="385.8" cy="404.4" r="11" fill="url(#pk)"/>
<circle cx="335.3" cy="434.2" r="11" fill="url(#pk)"/>
<path d="M203.3 134.3q2.2 -2.6 4.4 0" fill="none" stroke="#e8c8d0" stroke-width="0.9" stroke-opacity="0.8"/>
<rect x="203.8" y="133.7" width="3.4" height="2" fill="#183a90"/>
<rect x="199.7" y="134.9" width="11.6" height="8.2" fill="#0a55f5"/>
<path d="M230.8 131.9q2.2 -2.6 4.4 0" fill="none" stroke="#e8c8d0" stroke-width="0.9" stroke-opacity="0.8"/>
<rect x="231.3" y="131.3" width="3.4" height="2" fill="#183a90"/>
<rect x="227.2" y="132.5" width="11.6" height="8.2" fill="#0a55f5"/>
<path d="M209.1 153.6q2.2 -2.6 4.4 0" fill="none" stroke="#e8c8d0" stroke-width="0.9" stroke-opacity="0.8"/>
<rect x="209.6" y="153.0" width="3.4" height="2" fill="#183a90"/>
<rect x="205.5" y="154.2" width="11.6" height="8.2" fill="#0a55f5"/>
<path d="M236.6 151.1q2.2 -2.6 4.4 0" fill="none" stroke="#e8c8d0" stroke-width="0.9" stroke-opacity="0.8"/>
<rect x="237.1" y="150.5" width="3.4" height="2" fill="#183a90"/>
<rect x="233.0" y="151.7" width="11.6" height="8.2" fill="#0a55f5"/>
<path d="M217.3 178.3q2.2 -2.6 4.4 0" fill="none" stroke="#e8c8d0" stroke-width="0.9" stroke-opacity="0.8"/>
<rect x="217.8" y="177.7" width="3.4" height="2" fill="#183a90"/>
<rect x="213.7" y="178.9" width="11.6" height="8.2" fill="#0a55f5"/>
<path d="M244.8 175.3q2.2 -2.6 4.4 0" fill="none" stroke="#e8c8d0" stroke-width="0.9" stroke-opacity="0.8"/>
<rect x="245.3" y="174.7" width="3.4" height="2" fill="#183a90"/>
<rect x="241.2" y="175.9" width="11.6" height="8.2" fill="#0a55f5"/>
<path d="M225.8 204.3q2.2 -2.6 4.4 0" fill="none" stroke="#e8c8d0" stroke-width="0.9" stroke-opacity="0.8"/>
<rect x="226.3" y="203.7" width="3.4" height="2" fill="#183a90"/>
<rect x="222.2" y="204.9" width="11.6" height="8.2" fill="#0a55f5"/>
<path d="M253.3 201.8q2.2 -2.6 4.4 0" fill="none" stroke="#e8c8d0" stroke-width="0.9" stroke-opacity="0.8"/>
<rect x="253.8" y="201.2" width="3.4" height="2" fill="#183a90"/>
<rect x="249.7" y="202.4" width="11.6" height="8.2" fill="#0a55f5"/>
<path d="M234.3 229.8q2.2 -2.6 4.4 0" fill="none" stroke="#e8c8d0" stroke-width="0.9" stroke-opacity="0.8"/>
<rect x="234.8" y="229.2" width="3.4" height="2" fill="#183a90"/>
<rect x="230.7" y="230.4" width="11.6" height="8.2" fill="#0a55f5"/>
<path d="M261.3 226.8q2.2 -2.6 4.4 0" fill="none" stroke="#e8c8d0" stroke-width="0.9" stroke-opacity="0.8"/>
<rect x="261.8" y="226.2" width="3.4" height="2" fill="#183a90"/>
<rect x="257.7" y="227.4" width="11.6" height="8.2" fill="#0a55f5"/>
<path d="M223.3 244.3q2.2 -2.6 4.4 0" fill="none" stroke="#e8c8d0" stroke-width="0.9" stroke-opacity="0.8"/>
<rect x="223.8" y="243.7" width="3.4" height="2" fill="#183a90"/>
<rect x="219.7" y="244.9" width="11.6" height="8.2" fill="#0a55f5"/>
<path d="M460.8 354.3q2.2 -2.6 4.4 0" fill="none" stroke="#e8c8d0" stroke-width="0.9" stroke-opacity="0.8"/>
<rect x="461.3" y="353.7" width="3.4" height="2" fill="#183a90"/>
<rect x="457.2" y="354.9" width="11.6" height="8.2" fill="#0a55f5"/>
<path d="M421.8 374.8q2.2 -2.6 4.4 0" fill="none" stroke="#e8c8d0" stroke-width="0.9" stroke-opacity="0.8"/>
<rect x="422.3" y="374.2" width="3.4" height="2" fill="#183a90"/>
<rect x="418.2" y="375.4" width="11.6" height="8.2" fill="#0a55f5"/>
<path d="M383.8 400.3q2.2 -2.6 4.4 0" fill="none" stroke="#e8c8d0" stroke-width="0.9" stroke-opacity="0.8"/>
<rect x="384.3" y="399.7" width="3.4" height="2" fill="#183a90"/>
<rect x="380.2" y="400.9" width="11.6" height="8.2" fill="#0a55f5"/>
<path d="M333.5 429.8q2.2 -2.6 4.4 0" fill="none" stroke="#e8c8d0" stroke-width="0.9" stroke-opacity="0.8"/>
<rect x="334.0" y="429.2" width="3.4" height="2" fill="#183a90"/>
<rect x="329.9" y="430.4" width="11.6" height="8.2" fill="#0a55f5"/>
<rect x="267.7" y="311.0" width="12.2" height="8.5" fill="#0a55f5"/>
<path d="M337.5 394L338.5 388Q339 382.4 343.2 382.4Q347.4 382.4 347.9 388L348.9 394z" fill="#0a55f5"/>
<path d="M339.4 386.8l3.8 1.7 3.8 -1.7v3.6l-3.8 -1.5 -3.8 1.5z" fill="#0c1a3c"/>
<circle cx="343.2" cy="385.7" r="1.1" fill="#0c1a3c"/>
<text x="333.5" y="390.5" font-size="5" font-weight="bold" fill="#f4f0d0">1</text>
<text x="264.4" y="316.8" font-size="5" font-weight="bold" fill="#f4f0d0">1</text>
<path d="M265.8 280l10.4 10.4M276.2 280l-10.4 10.4" stroke="#fff" stroke-width="0.9" fill="none"/>
<text x="275.6" y="281.2" textLength="18.8" lengthAdjust="spacingAndGlyphs" font-size="6.4" fill="#fff" fill-opacity="0.95">Zone-1</text>
<path d="M39.3 529v6.8h40.3v-6.8" fill="none" stroke="#4a6c76" stroke-width="1.5"/>
<text x="72" y="527.6" textLength="17" lengthAdjust="spacingAndGlyphs" font-size="3.6" fill="#3a4a50">1000 feet</text>
</g>
<circle cx="4.3" cy="4.2" r="2.2" fill="none" stroke="#1b9ccb" stroke-width="0.9"/><path d="M4.3 1v6.4M1.2 4.2h6.2" stroke="#1b9ccb" stroke-width="0.5"/>
<text x="8.6" y="6.1" textLength="135.0" lengthAdjust="spacingAndGlyphs" font-size="6.3" fill="#1b9ccb" font-weight="bold" class="mono">waiti: Chablis YAK-52 Basic Training - 1.miz</text>
<text x="4.2" y="13.5" textLength="8.8" lengthAdjust="spacingAndGlyphs" font-size="5.7" fill="#ffffff" font-weight="bold">FILE</text>
<text x="18.0" y="13.5" textLength="11.5" lengthAdjust="spacingAndGlyphs" font-size="5.7" fill="#ffffff" font-weight="bold">VIEW</text>
<text x="33.8" y="13.5" textLength="10.2" lengthAdjust="spacingAndGlyphs" font-size="5.7" fill="#ffffff" font-weight="bold">EDIT</text>
<text x="48.0" y="13.5" textLength="16.8" lengthAdjust="spacingAndGlyphs" font-size="5.7" fill="#ffffff" font-weight="bold">FLIGHT</text>
<text x="69.0" y="13.5" textLength="24.8" lengthAdjust="spacingAndGlyphs" font-size="5.7" fill="#ffffff" font-weight="bold">CAMPAIGN</text>
<text x="98.0" y="13.5" textLength="27.0" lengthAdjust="spacingAndGlyphs" font-size="5.7" fill="#ffffff" font-weight="bold">CUSTOMIZE</text>
<text x="129.5" y="13.5" textLength="50.0" lengthAdjust="spacingAndGlyphs" font-size="5.7" fill="#ffffff" font-weight="bold">MISSION GENERATOR</text>
<text x="183.8" y="13.5" textLength="11.5" lengthAdjust="spacingAndGlyphs" font-size="5.7" fill="#ffffff" font-weight="bold">MISC</text>
<rect x="2.0" y="16.3" width="15.6" height="5.4" fill="#59595c"/>
<rect x="2.0" y="25.3" width="15.6" height="5.4" fill="#59595c"/>
<rect x="2.0" y="34.3" width="15.6" height="5.4" fill="#59595c"/>
<text x="5.4" y="57.2" textLength="8.6" lengthAdjust="spacingAndGlyphs" font-size="4.4" fill="#fff" font-weight="bold">MIS</text>
<rect x="2.0" y="59.3" width="15.6" height="5.4" fill="#59595c"/>
<rect x="2.0" y="68.3" width="15.6" height="5.4" fill="#59595c"/>
<rect x="2.0" y="77.3" width="15.6" height="5.4" fill="#34506e"/>
<rect x="2.0" y="86.3" width="15.6" height="5.4" fill="#59595c"/>
<rect x="2.0" y="95.3" width="15.6" height="5.4" fill="#59595c"/>
<rect x="2.0" y="104.3" width="15.6" height="5.4" fill="#59595c"/>
<rect x="2.0" y="113.3" width="15.6" height="5.4" fill="#59595c"/>
<circle cx="9.9" cy="127.7" r="3.7" fill="#2a9a50"/><circle cx="9.9" cy="127.4" r="1.5" fill="#1f7038"/>
<text x="5.8" y="140.6" textLength="8.2" lengthAdjust="spacingAndGlyphs" font-size="4.4" fill="#fff" font-weight="bold">OBJ</text>
<rect x="2.0" y="143.7" width="15.6" height="5.4" fill="#59595c"/>
<rect x="2.0" y="152.7" width="15.6" height="5.4" fill="#59595c"/>
<rect x="2.0" y="161.7" width="15.6" height="5.4" fill="#59595c"/>
<rect x="2.0" y="170.7" width="15.6" height="5.4" fill="#59595c"/>
<rect x="2.0" y="179.7" width="15.6" height="5.4" fill="#59595c"/>
<rect x="2.0" y="188.7" width="15.6" height="5.4" fill="#59595c"/>
<rect x="2.0" y="197.7" width="15.6" height="5.4" fill="#59595c"/>
<rect x="2.0" y="206.7" width="15.6" height="5.4" fill="#59595c"/>
<rect x="2.0" y="215.7" width="15.6" height="5.4" fill="#59595c"/>
<rect x="2.0" y="224.7" width="15.6" height="5.4" fill="#59595c"/>
<rect x="2.0" y="233.7" width="15.6" height="5.4" fill="#59595c"/>
<rect x="2.0" y="242.7" width="15.6" height="5.4" fill="#59595c"/>
<text x="5.4" y="256.8" textLength="9.0" lengthAdjust="spacingAndGlyphs" font-size="4.4" fill="#fff" font-weight="bold">MAP</text>
<rect x="2.0" y="259.7" width="15.6" height="5.4" fill="#59595c"/>
<rect x="2.0" y="268.7" width="15.6" height="5.4" fill="#59595c"/>
<rect x="2.0" y="277.7" width="15.6" height="5.4" fill="#59595c"/>
<path d="M8.1 21.2v-2.5h1.3v-1.8h1.8v4.3z" fill="#f2f2f2"/><rect x="8.9" y="18.9" width="0.9" height="1" fill="#59595c"/>
<path d="M7.3 26.6h2l.6.7h2.4v.7h-4l-1 1.9zM8.3 28.4h4.6l-1 1.6h-4.6z" fill="#f2f2f2"/>
<path d="M7.3 35h4.5v4.1h-4.5z" fill="#f2f2f2"/><rect x="8.7" y="35" width="1.7" height="1.4" fill="#59595c"/><rect x="8.3" y="37.6" width="2.5" height="1.5" fill="#8a8a8c"/>
<path d="M8.7 64v-3.4q1.1 -1 2.2 0v3.4" fill="none" stroke="#f2f2f2" stroke-width="0.9"/>
<path d="M6.6 72.6a1.4 1.4 0 0 1 1.2 -2.3a1.7 1.7 0 0 1 3 .4a1.2 1.2 0 0 1 1.8 1.1a1 1 0 0 1 -.4 1.7h-4.8z" fill="#f2f2f2"/>
<path d="M4.6 80l2 -1.5h6.6l2 1.5 -2 1.5h-6.6z" fill="#1f9fdc"/><path d="M7.4 78.4l-1.2 1.6 1.2 1.6M12.4 78.4l1.2 1.6 -1.2 1.6" stroke="#34506e" stroke-width="0.6" fill="none"/>
<rect x="8.2" y="87.3" width="3.3" height="3.6" rx="0.8" fill="#2a2a2c" stroke="#ece4d4" stroke-width="1.1"/>
<path d="M6.6 96.8h2.6v2.2h-2.6zM10.6 96.8h2.6v2.2h-2.6z" fill="#f2f2f2"/>
<path d="M7.6 107l1.4 1.4 3 -2.8" fill="none" stroke="#f2f2f2" stroke-width="0.9"/>
<path d="M3.6 114.4h2.4v3.2h-2.4zM13.8 114.4h2.4v3.2h-2.4zM7.2 114.4h1.9v3.2h-1.9zM10.6 114.4h1.9v3.2h-1.9zM6 116h1.2M9.1 116h1.5M12.5 116h1.3" fill="none" stroke="#c4c4c6" stroke-width="0.7"/>
<path d="M4 145.6l4 .2 2.2 -1 .8.2 -.8 1 3.6 .4 1.2 .6 -1.2 .5 -7.2 .3z" fill="#f2f2f2"/>
<path d="M4.2 154.4l1 1.8h8l1.2 -1.4h-3l-.6 -.8h-1.2v.8h-3.4z" fill="#f2f2f2"/>
<path d="M4 164.6l1 1.4h9.4l.8 -1.4h-3.2v-1.4h-.8v.7h-1.4l-.6 .7z" fill="#f2f2f2"/>
<path d="M5 173.4l.6 1.4h8l.8 -1.6h-2v-1h-4.4v1.2z" fill="#f2f2f2"/>
<path d="M5 180.4h3.8v3.4h-3.8zM10.8 180.4h3.8v3.4h-3.8zM8.8 182.1h2" fill="none" stroke="#f2f2f2" stroke-width="0.8"/>
<path d="M4.6 191l1 -1 1 1 -1 1zM7.4 191a1.2 1.2 0 0 1 2.4 0a1.2 1.2 0 0 1 -2.4 0M10.4 191a1.2 1.2 0 0 1 2.4 0a1.2 1.2 0 0 1 -2.4 0M13.2 191l1 -1 1 1 -1 1z" fill="none" stroke="#f2f2f2" stroke-width="0.7"/>
<path d="M5.4 200h2.8M11.6 200h2.8" stroke="#f2f2f2" stroke-width="0.7"/><circle cx="9.9" cy="200" r="1.5" fill="none" stroke="#f2f2f2" stroke-width="0.7"/>
<circle cx="9.9" cy="209" r="2.1" fill="#9a9a9c"/>
<circle cx="9.9" cy="218" r="1.6" fill="none" stroke="#a8a8aa" stroke-width="0.8"/>
<rect x="5.2" y="225.4" width="9.6" height="3.4" rx="1.2" fill="none" stroke="#f2f2f2" stroke-width="0.7"/><path d="M8.4 225.4v3.4M11.6 225.4v3.4" stroke="#f2f2f2" stroke-width="0.7"/>
<path d="M4.6 237.8l1.5 -2.8 1.5 2.8z" fill="none" stroke="#f2f2f2" stroke-width="0.7"/><circle cx="9.9" cy="236.5" r="1.3" fill="none" stroke="#f2f2f2" stroke-width="0.7"/><rect x="12.2" y="235.2" width="2.8" height="2.6" fill="none" stroke="#f2f2f2" stroke-width="0.7"/>
<path d="M8.5 243.6l2.8 2.8M11.3 243.6l-2.8 2.8" stroke="#e0141c" stroke-width="1.5"/>
<circle cx="7.2" cy="262.4" r="1.3" fill="none" stroke="#f2f2f2" stroke-width="0.7"/><path d="M8.5 262.4h4.4" stroke="#f2f2f2" stroke-width="0.7"/>
<text x="4.6" y="273.0" textLength="10.6" lengthAdjust="spacingAndGlyphs" font-size="4.6" fill="#f2f2f2">Draw</text>
<path d="M6 279v2.8M13.8 279v2.8M6 280.4h7.8M7.6 279.4l-1.4 1 1.4 1M12.2 279.4l1.4 1 -1.4 1" fill="none" stroke="#f2f2f2" stroke-width="0.6"/>
<circle cx="10" cy="543" r="3.9" fill="#d4545c"/><circle cx="10" cy="543" r="2.2" fill="none" stroke="#b03a40" stroke-width="0.6"/><path d="M10.6 541.8v2.4l1.6 -1.2z" fill="#b03a40"/>
<rect x="0.0" y="550.7" width="1000.0" height="11.3" fill="#2a3a4c"/>
<path d="M0 551h1000" stroke="#223040" stroke-width="0.7"/>
<text x="3.0" y="558.6" textLength="11.0" lengthAdjust="spacingAndGlyphs" font-size="5" fill="#c2ccd6">DFLT</text>
<text x="17.2" y="558.4" font-size="5" fill="#c2ccd6">-</text>
<text x="57.0" y="558.6" textLength="4.6" lengthAdjust="spacingAndGlyphs" font-size="5" fill="#c2ccd6">LL</text>
<text x="66.5" y="558.6" textLength="55.5" lengthAdjust="spacingAndGlyphs" font-size="5" fill="#c2ccd6">N 42°24'43", E 41°33'43"</text>
<text x="150.0" y="558.6" textLength="8.8" lengthAdjust="spacingAndGlyphs" font-size="5" fill="#e4eaf0">ALT</text>
<text x="164.0" y="558.6" textLength="5.0" lengthAdjust="spacingAndGlyphs" font-size="5" fill="#c2ccd6">16</text>
<text x="187.6" y="558.6" textLength="6.6" lengthAdjust="spacingAndGlyphs" font-size="5" fill="#e4eaf0">δM</text>
<text x="198.0" y="558.6" textLength="12.0" lengthAdjust="spacingAndGlyphs" font-size="5" fill="#c2ccd6">+6.6°</text>
<text x="227.6" y="558.6" textLength="28.0" lengthAdjust="spacingAndGlyphs" font-size="5" fill="#e4eaf0">PAN/SELECT</text>
<path d="M181 552.5v7.5" stroke="#3a4c60" stroke-width="0.6"/>
<path d="M217 552.5v7.5" stroke="#3a4c60" stroke-width="0.6"/>
<rect x="353.0" y="553.0" width="12.6" height="7.0" fill="#222e3e"/>
<text x="354.6" y="558.5" textLength="9.4" lengthAdjust="spacingAndGlyphs" font-size="4.8" fill="#fff" font-weight="bold">MAP</text>
<rect x="370.4" y="553.0" width="11.2" height="7.0" fill="#222e3e"/>
<text x="372.2" y="558.5" textLength="7.8" lengthAdjust="spacingAndGlyphs" font-size="4.8" fill="#fff" font-weight="bold">SAT</text>
<rect x="386.0" y="553.0" width="13.2" height="7.0" fill="#5a94d2"/>
<text x="388.6" y="558.5" textLength="8.0" lengthAdjust="spacingAndGlyphs" font-size="4.8" fill="#fff" font-weight="bold" stroke="#1c2c48" stroke-width="0.7" paint-order="stroke">ALT</text>
<rect x="411.8" y="553.0" width="11.8" height="7.0" fill="#5a94d2"/>
<path d="M413.6 556.5h8" fill="none" stroke="#fff" stroke-width="0.9"/><rect x="416.4" y="555.4" width="2.6" height="2.2" fill="#24344c"/><path d="M419.6 555.6l1.6 .9 -1.6 .9" fill="none" stroke="#fff" stroke-width="0.6"/>
<rect x="431.2" y="553.0" width="9.6" height="7.0" fill="#222e3e"/>
<path d="M434.4 554.6h-1v4h1M437.6 554.6h1v4h-1M435.4 554.4l1.4 .8" fill="none" stroke="#d8dde4" stroke-width="0.7"/>
<text x="952.2" y="558.6" textLength="43.5" lengthAdjust="spacingAndGlyphs" font-size="5" fill="#c8d2dc">29.04.2023 3:26:19</text>
<rect x="520.0" y="0.0" width="480.0" height="26.0" fill="#2e4053"/>
<text x="525.5" y="24.1" textLength="25.6" lengthAdjust="spacingAndGlyphs" font-size="5.9" fill="#8fd4f2" font-weight="bold">TRIGGERS</text>
<text x="524.0" y="38.3" textLength="21.6" lengthAdjust="spacingAndGlyphs" font-size="5" fill="#b4bfca">TRIGGERS</text>
<text x="694.0" y="38.3" textLength="27.0" lengthAdjust="spacingAndGlyphs" font-size="5" fill="#b4bfca">CONDITIONS</text>
<text x="846.8" y="38.3" textLength="18.8" lengthAdjust="spacingAndGlyphs" font-size="5" fill="#b4bfca">ACTIONS</text>
<path d="M951.3 7.2q3.4 -2.6 6.8 0l-3.4 3.2z" fill="#2aa2c4"/>
<path d="M963.6 4.3h4v.9h-1.3l.5 6h.8v.8h-4v-.8h.8l.5 -6h-1.3z" fill="#3aa0c2"/>
<path d="M990 7.0l2 2M992 7.0l-2 2" stroke="#4a5c70" stroke-width="0.6"/>
<path d="M990 20.0l2 2M992 20.0l-2 2" stroke="#4a5c70" stroke-width="0.6"/>
<rect x="524.5" y="42.7" width="162.9" height="156.2" fill="#222e3d"/>
<rect x="640.2" y="32.3" width="21.8" height="7.5" fill="#485d7d"/>
<text x="642.8" y="38.3" textLength="16.6" lengthAdjust="spacingAndGlyphs" font-size="5" fill="#fff" font-weight="bold">CLONE</text>
<path d="M669.7 37.3l2.3 -2 2.3 2" fill="none" stroke="#c8d2dc" stroke-width="1.05"/>
<path d="M681.1 35.3l2.3 2 2.3 -2" fill="none" stroke="#c8d2dc" stroke-width="1.05"/>
<rect x="694.0" y="42.7" width="147.0" height="156.2" fill="#222e3d"/>
<rect x="793.8" y="32.3" width="21.8" height="7.5" fill="#485d7d"/>
<text x="796.4" y="38.3" textLength="16.6" lengthAdjust="spacingAndGlyphs" font-size="5" fill="#fff" font-weight="bold">CLONE</text>
<path d="M823.3 37.3l2.3 -2 2.3 2" fill="none" stroke="#c8d2dc" stroke-width="1.05"/>
<path d="M834.7 35.3l2.3 2 2.3 -2" fill="none" stroke="#c8d2dc" stroke-width="1.05"/>
<rect x="847.6" y="42.7" width="147.4" height="156.2" fill="#222e3d"/>
<rect x="947.8" y="32.3" width="21.8" height="7.5" fill="#485d7d"/>
<text x="950.4" y="38.3" textLength="16.6" lengthAdjust="spacingAndGlyphs" font-size="5" fill="#fff" font-weight="bold">CLONE</text>
<path d="M977.3 37.3l2.3 -2 2.3 2" fill="none" stroke="#c8d2dc" stroke-width="1.05"/>
<path d="M988.7 35.3l2.3 2 2.3 -2" fill="none" stroke="#c8d2dc" stroke-width="1.05"/>
<rect x="524.5" y="42.7" width="162.9" height="7.0" fill="#19222f"/>
<rect x="847.6" y="42.7" width="147.4" height="7.0" fill="#19222f"/>
<text x="528.0" y="48.4" textLength="96.0" lengthAdjust="spacingAndGlyphs" font-size="4.8" fill="#8fd0e6">1 ONCE (Trigger 1682734228, ON MISSION START)</text>
<text x="851.2" y="48.4" textLength="108.8" lengthAdjust="spacingAndGlyphs" font-size="4.8" fill="#8fd0e6">SCENERY REMOVE OBJECTS ZONE (Zone-1, TREES ONLY)</text>
<rect x="524.0" y="202.3" width="39.2" height="9.2" fill="url(#bt)" stroke="#2a3c54" stroke-width="0.5"/>
<text x="538.2" y="209.1" textLength="10.8" lengthAdjust="spacingAndGlyphs" font-size="5.4" fill="#fff" font-weight="bold">NEW</text>
<rect x="648.9" y="202.3" width="38.7" height="9.2" fill="url(#bt)" stroke="#2a3c54" stroke-width="0.5"/>
<text x="659.2" y="209.1" textLength="18.0" lengthAdjust="spacingAndGlyphs" font-size="5.4" fill="#fff" font-weight="bold">DELETE</text>
<rect x="693.0" y="202.3" width="39.0" height="9.2" fill="url(#bt)" stroke="#2a3c54" stroke-width="0.5"/>
<text x="707.1" y="209.1" textLength="10.8" lengthAdjust="spacingAndGlyphs" font-size="5.4" fill="#fff" font-weight="bold">NEW</text>
<rect x="756.2" y="203.0" width="22.0" height="7.9" fill="url(#bt)" stroke="#2a3c54" stroke-width="0.5"/>
<text x="764.2" y="209.1" textLength="6.0" lengthAdjust="spacingAndGlyphs" font-size="5.4" fill="#fff" font-weight="bold">OR</text>
<rect x="847.2" y="202.3" width="38.8" height="9.2" fill="url(#bt)" stroke="#2a3c54" stroke-width="0.5"/>
<text x="861.2" y="209.1" textLength="10.8" lengthAdjust="spacingAndGlyphs" font-size="5.4" fill="#fff" font-weight="bold">NEW</text>
<rect x="956.0" y="202.3" width="39.2" height="9.2" fill="url(#bt)" stroke="#2a3c54" stroke-width="0.5"/>
<text x="966.6" y="209.1" textLength="18.0" lengthAdjust="spacingAndGlyphs" font-size="5.4" fill="#fff" font-weight="bold">DELETE</text>
<rect x="708.0" y="312.0" width="24.5" height="7.8" fill="url(#bt)" stroke="#2a3c54" stroke-width="0.5"/>
<text x="714.0" y="318.0" textLength="12.6" lengthAdjust="spacingAndGlyphs" font-size="5.4" fill="#fff" font-weight="bold">OPEN</text>
<rect x="738.0" y="312.0" width="24.8" height="7.8" fill="url(#bt)" stroke="#2a3c54" stroke-width="0.5"/>
<text x="743.3" y="318.0" textLength="14.2" lengthAdjust="spacingAndGlyphs" font-size="5.4" fill="#fff" font-weight="bold">RESET</text>
<text x="524.5" y="220.2" textLength="12.2" lengthAdjust="spacingAndGlyphs" font-size="5" fill="#b4bfca">TYPE:</text>
<rect x="614.0" y="214.8" width="73.4" height="6.7" fill="#212c3b"/>
<text x="615.2" y="220.1" textLength="16.4" lengthAdjust="spacingAndGlyphs" font-size="5.3" fill="#d2dae2">1 ONCE</text>
<path d="M683.2 217.7l1.1 1.1 1.1 -1.1" fill="none" stroke="#6e7e90" stroke-width="0.6"/>
<text x="524.5" y="236.9" textLength="13.2" lengthAdjust="spacingAndGlyphs" font-size="5" fill="#b4bfca">NAME:</text>
<rect x="629.4" y="231.8" width="58.0" height="6.5" fill="#212c3b"/>
<text x="630.6" y="237.0" textLength="40.0" lengthAdjust="spacingAndGlyphs" font-size="5.3" fill="#d2dae2">Trigger 1682734228</text>
<text x="524.5" y="245.5" textLength="15.0" lengthAdjust="spacingAndGlyphs" font-size="5" fill="#b4bfca">EVENT:</text>
<rect x="629.4" y="240.4" width="58.0" height="6.5" fill="#212c3b"/>
<text x="630.6" y="245.6" textLength="42.0" lengthAdjust="spacingAndGlyphs" font-size="5.3" fill="#d2dae2">ON MISSION START</text>
<path d="M683.2 243.2l1.1 1.1 1.1 -1.1" fill="none" stroke="#6e7e90" stroke-width="0.6"/>
<text x="847.0" y="220.2" textLength="16.6" lengthAdjust="spacingAndGlyphs" font-size="5" fill="#b4bfca">ACTION:</text>
<rect x="898.0" y="215.2" width="96.4" height="6.2" fill="#212c3b"/>
<text x="899.2" y="220.2" textLength="78.0" lengthAdjust="spacingAndGlyphs" font-size="5.3" fill="#d2dae2">SCENERY REMOVE OBJECTS ZONE</text>
<path d="M990.2 217.8l1.1 1.1 1.1 -1.1" fill="none" stroke="#6e7e90" stroke-width="0.6"/>
<text x="847.0" y="236.9" textLength="12.0" lengthAdjust="spacingAndGlyphs" font-size="5" fill="#b4bfca">ZONE:</text>
<rect x="913.6" y="232.0" width="80.8" height="6.0" fill="#212c3b"/>
<text x="914.8" y="236.9" textLength="15.6" lengthAdjust="spacingAndGlyphs" font-size="5.3" fill="#d2dae2">Zone-1</text>
<path d="M990.2 234.5l1.1 1.1 1.1 -1.1" fill="none" stroke="#6e7e90" stroke-width="0.6"/>
<text x="847.0" y="245.0" textLength="32.0" lengthAdjust="spacingAndGlyphs" font-size="5" fill="#b4bfca">OBJECTS MASK:</text>
<rect x="913.6" y="240.3" width="80.8" height="6.0" fill="#212c3b"/>
<text x="914.8" y="245.2" textLength="27.5" lengthAdjust="spacingAndGlyphs" font-size="5.3" fill="#d2dae2">TREES ONLY</text>
<path d="M990.2 242.8l1.1 1.1 1.1 -1.1" fill="none" stroke="#6e7e90" stroke-width="0.6"/>
<text x="524.5" y="260.8" textLength="15.4" lengthAdjust="spacingAndGlyphs" font-size="5" fill="#b4bfca">COLOR:</text>
<text x="526.2" y="272.1" font-size="4.8" fill="#b4bfca">R</text>
<rect x="532.2" y="267.1" width="30.1" height="6.3" fill="#212c3b"/>
<path d="M536.6 269.0l-1.1 1.2 1.1 1.2M538.8 269.0l1.1 1.2 -1.1 1.2" fill="none" stroke="#56667a" stroke-width="0.6"/>
<text x="543.4" y="272.1" textLength="8.2" lengthAdjust="spacingAndGlyphs" font-size="5.3" fill="#d2dae2">255</text>
<text x="526.2" y="281.5" font-size="4.8" fill="#b4bfca">G</text>
<rect x="532.2" y="276.5" width="30.1" height="6.3" fill="#212c3b"/>
<path d="M536.6 278.4l-1.1 1.2 1.1 1.2M538.8 278.4l1.1 1.2 -1.1 1.2" fill="none" stroke="#56667a" stroke-width="0.6"/>
<text x="543.4" y="281.5" textLength="8.2" lengthAdjust="spacingAndGlyphs" font-size="5.3" fill="#d2dae2">255</text>
<text x="526.2" y="290.7" font-size="4.8" fill="#b4bfca">B</text>
<rect x="532.2" y="285.7" width="30.1" height="6.3" fill="#212c3b"/>
<path d="M536.6 287.6l-1.1 1.2 1.1 1.2M538.8 287.6l1.1 1.2 -1.1 1.2" fill="none" stroke="#56667a" stroke-width="0.6"/>
<text x="543.4" y="290.7" textLength="8.2" lengthAdjust="spacingAndGlyphs" font-size="5.3" fill="#d2dae2">255</text>
<rect x="566.4" y="257.8" width="70.9" height="45.1" fill="#34503f"/>
<rect x="567.2" y="258.6" width="16.8" height="5.6" fill="#000000"/>
<rect x="584.7" y="258.6" width="16.8" height="5.6" fill="#909090"/>
<rect x="602.2" y="258.6" width="16.8" height="5.6" fill="#980010"/>
<rect x="619.7" y="258.6" width="16.8" height="5.6" fill="#909000"/>
<rect x="567.2" y="264.9" width="16.8" height="5.6" fill="#009000"/>
<rect x="584.7" y="264.9" width="16.8" height="5.6" fill="#009090"/>
<rect x="602.2" y="264.9" width="16.8" height="5.6" fill="#000090"/>
<rect x="619.7" y="264.9" width="16.8" height="5.6" fill="#900090"/>
<rect x="567.2" y="271.2" width="16.8" height="5.6" fill="#908c48"/>
<rect x="584.7" y="271.2" width="16.8" height="5.6" fill="#004848"/>
<rect x="602.2" y="271.2" width="16.8" height="5.6" fill="#0080ff"/>
<rect x="619.7" y="271.2" width="16.8" height="5.6" fill="#004890"/>
<rect x="567.2" y="277.5" width="16.8" height="5.6" fill="#8000ff"/>
<rect x="584.7" y="277.5" width="16.8" height="5.6" fill="#904800"/>
<rect x="602.2" y="277.5" width="16.8" height="5.6" fill="#ffffff"/>
<rect x="619.7" y="277.5" width="16.8" height="5.6" fill="#c8c8c8"/>
<rect x="567.2" y="283.8" width="16.8" height="5.6" fill="#ff0000"/>
<rect x="584.7" y="283.8" width="16.8" height="5.6" fill="#ffff00"/>
<rect x="602.2" y="283.8" width="16.8" height="5.6" fill="#00ff00"/>
<rect x="619.7" y="283.8" width="16.8" height="5.6" fill="#00ffff"/>
<rect x="567.2" y="290.1" width="16.8" height="5.6" fill="#0000ff"/>
<rect x="584.7" y="290.1" width="16.8" height="5.6" fill="#ff20ff"/>
<rect x="602.2" y="290.1" width="16.8" height="5.6" fill="#ffff80"/>
<rect x="619.7" y="290.1" width="16.8" height="5.6" fill="#00ff80"/>
<rect x="567.2" y="296.4" width="16.8" height="5.6" fill="#80ffff"/>
<rect x="584.7" y="296.4" width="16.8" height="5.6" fill="#8080ff"/>
<rect x="602.2" y="296.4" width="16.8" height="5.6" fill="#ff0080"/>
<rect x="619.7" y="296.4" width="16.8" height="5.6" fill="#e880a8"/>
<rect x="646.0" y="273.2" width="17.8" height="18.2" fill="#ffffff" stroke="#8a96a4" stroke-width="0.5"/>
<path d="M520 308.2h480M520 323.8h480" stroke="#384a5e" stroke-width="0.6"/>
<text x="526.0" y="317.7" textLength="47.6" lengthAdjust="spacingAndGlyphs" font-size="4.9" fill="#b4bfca">INITIALIZATION SCRIPT</text>
<rect x="768.4" y="312.6" width="82.8" height="6.6" fill="#212c3b"/>
<text x="869.2" y="317.7" textLength="12.4" lengthAdjust="spacingAndGlyphs" font-size="4.9" fill="#b4bfca">CODE</text>
<rect x="891.5" y="312.6" width="101.7" height="6.6" fill="#212c3b"/>
<text x="839.7" y="508.2" textLength="44.5" lengthAdjust="spacingAndGlyphs" font-size="5.2" fill="#e2505e" font-weight="bold">SRS not connected</text>
<text x="839.7" y="516.0" textLength="104.3" lengthAdjust="spacingAndGlyphs" font-size="5.2" fill="#e2505e" font-weight="bold">Connect to an SRS server and join a mission</text>
<text x="839.7" y="523.9" textLength="43.0" lengthAdjust="spacingAndGlyphs" font-size="5.2" fill="#e2505e" font-weight="bold">SRS DCS settings:</text>
<text x="839.7" y="531.7" textLength="74.5" lengthAdjust="spacingAndGlyphs" font-size="5.2" fill="#e2505e" font-weight="bold">Options -> SPECIAL -> DCS-SRS</text>
<text x="839.7" y="539.6" textLength="59.5" lengthAdjust="spacingAndGlyphs" font-size="5.2" fill="#e2505e" font-weight="bold">Toggle (by default) with:</text>
<text x="839.7" y="547.4" textLength="72.5" lengthAdjust="spacingAndGlyphs" font-size="5.2" fill="#e2505e" font-weight="bold">LEFT CTRL + LEFT SHIFT + ESC</text>
</svg>
</body></html>
